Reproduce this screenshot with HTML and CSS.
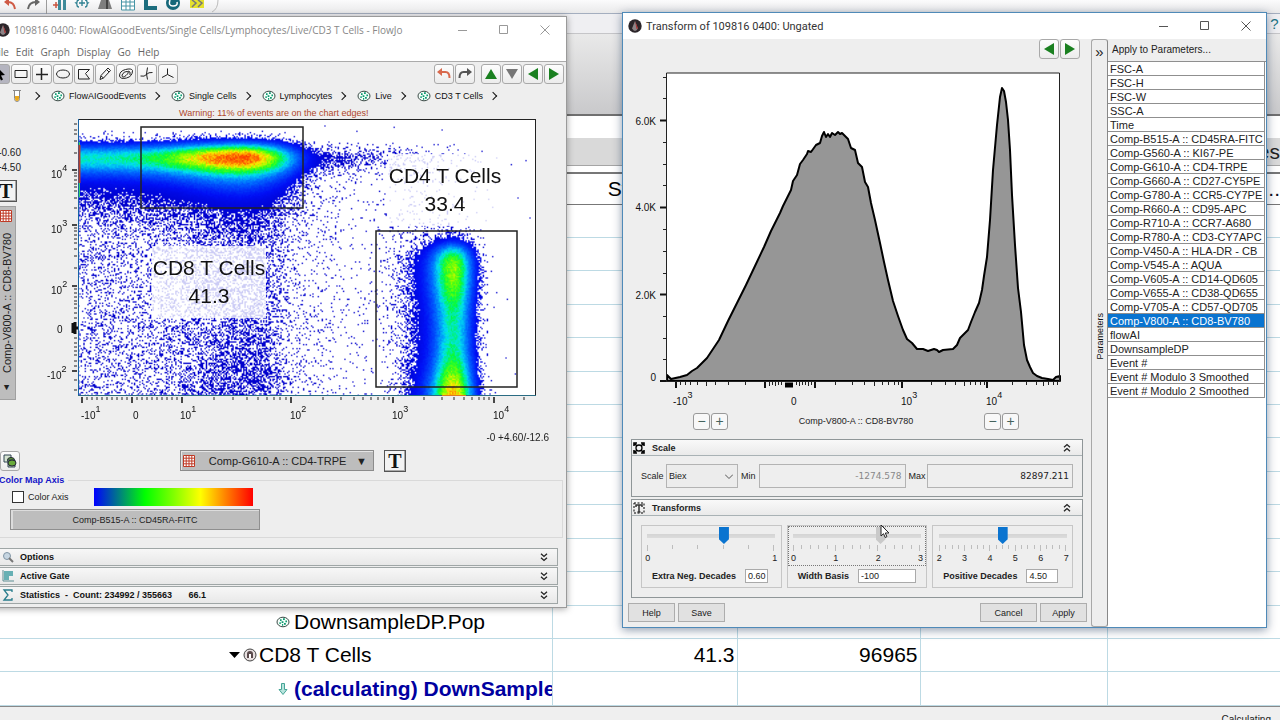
FILE: index.html
```html
<!DOCTYPE html>
<html lang="en">
<head>
<meta charset="utf-8">
<title>FlowJo</title>
<link rel="stylesheet" href="styles.css">
</head>
<body>
<svg class="defs" width="0" height="0" aria-hidden="true">
  <defs>
    <symbol id="pop" viewBox="0 0 14 12"><ellipse cx="7" cy="6" rx="6" ry="4.8" fill="#f4fffa" stroke="#3b4a46" stroke-width="1"/><path d="M4 4.2h1.6M7 3.2h1.8M9.4 5.4h1.6M5.6 6.2h1.8M3.4 7.2h1.4M8 7.8h1.8M6 8.8h1.2" stroke="#109a72" stroke-width="1.7"/></symbol>
    <symbol id="app" viewBox="0 0 14 14"><circle cx="7" cy="7" r="6.7" fill="#2b2529"/><path d="M7 2 4 9.5l2 2.2h2l2-2.2z" fill="#8d8487"/><path d="M7 2l3 7.5-1.4.5z" fill="#b02c2c"/></symbol>
    <symbol id="grid" viewBox="0 0 12 12"><path d="M.5.5h11v11H.5zM3.2 0v12M6 0v12M8.8 0v12M0 3.2h12M0 6h12M0 8.800h12" fill="#fff" stroke="#bf3a26" stroke-width="1"/></symbol>
    <symbol id="down2" viewBox="0 0 8 9"><path d="M1 .8l3 2.700 3-2.700M1 4.800l3 2.700 3-2.700" fill="none" stroke="#222" stroke-width="1.300"/></symbol>
    <symbol id="undo" viewBox="0 0 16 14"><path d="M3.500 5h6q4 0 4 6" fill="none" stroke="currentColor" stroke-width="2"/><path d="M1 5l5-4v8z" fill="currentColor"/></symbol>
    <symbol id="tri" viewBox="0 0 12 10"><path d="M6 0l6 10H0z" fill="currentColor"/></symbol>
  </defs>
</svg>

<main class="workspace">
  <header class="ribbon-tools">
    <svg width="220" height="14" viewBox="0 0 220 14" aria-hidden="true">
      <path d="M8 2q6 0 7 7" fill="none" stroke="#cf5a45" stroke-width="2"/><path d="M4 2l5-4v8z" fill="#cf5a45"/>
      <path d="M36 2q-7 0-8 7" fill="none" stroke="#666" stroke-width="2"/><path d="M40 2l-5-4v8z" fill="#666"/>
      <path d="M46.500 0v14" stroke="#9c9c9c"/>
      <path d="M53 5h6M56 2v6" stroke="#c9543f" stroke-width="1.500"/><path d="M58 0h3v10h-3zM63 0h3v10h-3z" fill="#3f8b9a"/>
      <path d="M79 0q-2 0-2 2t-1 1q1 0 1 2t2 2M85 0q2 0 2 2t1 1q-1 0-1 2t-2 2M79 3h6M82 0v6" fill="none" stroke="#2f8192" stroke-width="1.300"/>
      <path d="M101 0h8l3 9H98z" fill="#7e7e7e"/><path d="M106 0h2v9h-2z" fill="#444"/>
      <path d="M121.500-2h13v12h-13zM126 0v10M130 0v10M121 2h13M121 6h13" fill="#fff" stroke="#4795a6"/>
      <path d="M144 0h4v6h9v4h-13z" fill="#1c6d7e"/>
      <circle cx="173" cy="3" r="7" fill="#17687a"/><path d="M170 0q-2 6 3 6t4-4" fill="none" stroke="#fff" stroke-width="1.500"/>
      <path d="M190 0h14v8h-14z" fill="#e4e12c"/><path d="M192 0l4 3-4 4M198 0l4 3-4 4" fill="none" stroke="#777" stroke-width="1.500"/>
      <path d="M218 0q0 9-6 12" fill="none" stroke="#bbb"/>
    </svg>
  </header>
  <div class="ribbon-tabs"><button class="help-mark" type="button">?</button></div>
  <div class="ribbon-body"></div>
  <div class="search-strip"></div>
  <div class="group-strip"><span>es</span></div>
  <div class="tree">
    <table>
      <colgroup><col class="c-name"><col class="c-stat"><col class="c-count"><col class="c-extra"><col></colgroup>
      <thead><tr><th></th><th>Statistic</th><th></th><th></th><th class="last">I...</th></tr></thead>
      <tbody>
        <tr><td></td><td></td><td></td><td></td><td></td></tr><tr><td></td><td></td><td></td><td></td><td></td></tr>
        <tr><td></td><td></td><td></td><td></td><td></td></tr><tr><td></td><td></td><td></td><td></td><td></td></tr>
        <tr><td></td><td></td><td></td><td></td><td></td></tr><tr><td></td><td></td><td></td><td></td><td></td></tr>
        <tr><td></td><td></td><td></td><td></td><td></td></tr><tr><td></td><td></td><td></td><td></td><td></td></tr>
        <tr><td></td><td></td><td></td><td></td><td></td></tr><tr><td></td><td></td><td></td><td></td><td></td></tr>
        <tr><td></td><td></td><td></td><td></td><td></td></tr><tr><td></td><td></td><td></td><td></td><td></td></tr>
        <tr><td><div class="node deep"><svg width="14" height="12"><use href="#pop"/></svg>DownsampleDP.Pop</div></td><td></td><td></td><td></td><td></td></tr>
        <tr><td><div class="node"><svg width="28" height="14" viewBox="0 0 28 14"><path d="M0 4h11l-5.500 6z"/><circle cx="21" cy="7" r="6" fill="#e8e0e0" stroke="#444"/><path d="M18 10V6q0-3 3-3t3 3v4z" fill="#5a4a4c"/><path d="M20 10V6h2v4z" fill="#fff"/></svg>CD8 T Cells</div></td><td>41.3</td><td>96965</td><td></td><td></td></tr>
        <tr><td><div class="node deep busy"><svg width="14" height="14" viewBox="0 0 14 14"><path d="M5.500 1.500h3v6h2.500l-4 5-4-5h2.500z" fill="#b8e4dd" stroke="#46a596"/></svg>(calculating) DownSample</div></td><td></td><td></td><td></td><td></td></tr>
      </tbody>
    </table>
  </div>
  <footer class="status">Calculating</footer>
</main>

<section class="win graph" aria-label="Graph window">
  <div class="titlebar"><svg width="14" height="14"><use href="#app"/></svg><span>109816 0400: FlowAIGoodEvents/Single Cells/Lymphocytes/Live/CD3 T Cells - FlowJo</span>
    <svg class="caption" width="92" height="12" viewBox="0 0 92 12" fill="none" stroke="#999"><path d="M1 6.500h9M42.500 1.500h8v8h-8zM83.500 1.500l9 9M92.500 1.500l-9 9"/></svg></div>
  <nav class="menu"><button>File</button><button>Edit</button><button>Graph</button><button>Display</button><button>Go</button><button>Help</button></nav>
  <div class="tools">
    <button class="on" aria-label="Select"><svg width="16" height="16" viewBox="0 0 16 16"><path d="M5 1l8 8-4 .5 2 4-2 1-2-4-2 2z"/></svg></button>
    <button aria-label="Rectangle"><svg width="16" height="16" viewBox="0 0 16 16"><path class="ln" d="M2 4.500h12v7H2z"/></svg></button>
    <button aria-label="Quad"><svg width="16" height="16" viewBox="0 0 16 16"><path class="ln" d="M2 8.500h12M7.500 2v12" stroke-width="1.500"/></svg></button>
    <button aria-label="Ellipse"><svg width="16" height="16" viewBox="0 0 16 16"><ellipse class="ln" cx="8" cy="8" rx="6.500" ry="4"/></svg></button>
    <button aria-label="Polygon"><svg width="16" height="16" viewBox="0 0 16 16"><path class="ln" d="M2.500 3.500h11l-4 4 4 5.500h-11z"/></svg></button>
    <button aria-label="Pencil"><svg width="16" height="16" viewBox="0 0 16 16"><path class="ln" d="M3 13.500l1-4 7-7.500 2.500 2.500-7 7.500zM9.500 3.500l2.500 2.500M4 10l2.500 2"/></svg></button>
    <button aria-label="Autogate"><svg width="16" height="16" viewBox="0 0 16 16"><path class="ln" d="M1.500 10q0-5 6-6.500t7 1q0 6-6 7.500t-7-2zM4 9q2-4 5-3.500t-1 4T4 9zM10 5l2 1v3"/></svg></button>
    <button aria-label="Curly quad"><svg width="16" height="16" viewBox="0 0 16 16"><path class="ln" d="M1.500 10q4 1 6-1.500t6-2M8.500 1.500q-2 7 0 12"/></svg></button>
    <button aria-label="Spider"><svg width="16" height="16" viewBox="0 0 16 16"><path class="ln" d="M7.500 2.500v6L2 11.500M7.500 8.500l6 3"/></svg></button>
    <span class="fill"></span>
    <button class="red" aria-label="Undo"><svg width="16" height="14"><use href="#undo"/></svg></button>
    <button class="gry" aria-label="Redo"><svg class="flip" width="16" height="14"><use href="#undo"/></svg></button>
    <button class="grn gap" aria-label="Up"><svg width="12" height="10"><use href="#tri"/></svg></button>
    <button class="lgt" aria-label="Down"><svg class="r180" width="12" height="10"><use href="#tri"/></svg></button>
    <button class="grn" aria-label="Previous"><svg class="r270" width="12" height="10"><use href="#tri"/></svg></button>
    <button class="grn" aria-label="Next"><svg class="r90" width="12" height="10"><use href="#tri"/></svg></button>
  </div>
  <ol class="crumbs">
    <li><svg width="8" height="12" viewBox="0 0 8 12"><path d="M0 .5h8M1.500.5v8q0 3 2.500 3t2.500-3v-8" fill="#fff" stroke="#888"/><path d="M2 6h4v2.500q0 2.500-2 2.500t-2-2.500z" fill="#e9a81c"/></svg></li>
    <li><svg width="14" height="12"><use href="#pop"/></svg>FlowAIGoodEvents</li>
    <li><svg width="14" height="12"><use href="#pop"/></svg>Single Cells</li>
    <li><svg width="14" height="12"><use href="#pop"/></svg>Lymphocytes</li>
    <li><svg width="14" height="12"><use href="#pop"/></svg>Live</li>
    <li><svg width="14" height="12"><use href="#pop"/></svg>CD3 T Cells</li>
  </ol>
  <p class="warning">Warning: 11% of events are on the chart edges!</p>
  <div class="plot-row">
    <div class="side">
      <div class="coef">-0.60<br>+4.50</div>
      <button class="tbtn" aria-label="Y axis text">T</button>
      <button class="vcombo" aria-haspopup="listbox"><span>▲</span><span>Comp-V800-A :: CD8-BV780</span><svg width="12" height="12"><use href="#grid"/></svg></button>
    </div>
    <div class="plot">
      <canvas id="density" width="344" height="207"></canvas>
      <svg class="axes" width="530" height="328" viewBox="24 119 530 328">
        <rect x="152" y="246" width="114" height="72" fill="#fff" opacity=".8"/>
        <rect x="388" y="154" width="114" height="72" fill="#fff" opacity=".8"/>
        <path d="M78 119.500h458M535.500 119v277" stroke="#222" fill="none"/>
        <path d="M78.500 119v277" stroke="#1763a5"/><path d="M79.500 145v38" stroke="#b64030" stroke-width="2"/><path d="M79.500 142v3M79.500 183v14" stroke="#37d26a"/>
        <path d="M78 395.500h458" stroke="#2a6c83"/><path d="M442 395.500h24" stroke="#e07b20"/>
        <path d="M141 127h162v81H141zM376 231h141v156H376z" fill="none" stroke="#222" stroke-width="1.500"/>
        <path d="M72 170h5M72 225h5M72 286h5M72 371h5M82 397v6M132 397v6M182 397v6M291 397v6M393 397v6M494 397v6" stroke="#111" stroke-width="1.500"/>
        <path d="M73 323v10M72 328h6M75 322v12" stroke="#111" stroke-width="3"/>
        <path d="M74 124h3M74 130h3M74 134h3M74 141h3M74 153h3M74 173h3M74 176h3M74 180h3M74 184h3M74 187h3M74 191h3M74 198h3M74 208h3M74 228h3M74 231h3M74 235h3M74 239h3M74 243h3M74 249h3M74 256h3M74 268h3M74 289h3M74 293h3M74 297h3M74 301h3M74 304h3M74 308h3M74 313h3M74 318h3M74 338h3M74 343h3M74 347h3M74 351h3M74 355h3M74 361h3M74 366h3M74 380h3M74 390h3" stroke="#222"/>
        <path d="M87 397v3M92 397v3M97 397v3M102 397v3M107 397v3M112 397v3M117 397v3M122 397v3M127 397v3M137 397v3M142 397v3M147 397v3M152 397v3M157 397v3M162 397v3M167 397v3M172 397v3M177 397v3M214 397v3M233 397v3M247 397v3M258 397v3M267 397v3M274 397v3M280 397v3M286 397v3M323 397v3M341 397v3M354 397v3M363 397v3M371 397v3M378 397v3M384 397v3M389 397v3M424 397v3M442 397v3M454 397v3M464 397v3M472 397v3M479 397v3M484 397v3M489 397v3M524 397v3" stroke="#222"/>
        <g class="tick">
          <text x="51" y="178">10<tspan dy="-7">4</tspan></text><text x="51" y="233">10<tspan dy="-7">3</tspan></text><text x="51" y="294">10<tspan dy="-7">2</tspan></text><text x="57" y="333">0</text><text x="47" y="379">-10<tspan dy="-7">2</tspan></text>
          <text x="81" y="419">-10<tspan dy="-7">1</tspan></text><text x="133" y="419">0</text><text x="180" y="419">10<tspan dy="-7">1</tspan></text><text x="290" y="419">10<tspan dy="-7">2</tspan></text><text x="392" y="419">10<tspan dy="-7">3</tspan></text><text x="493" y="419">10<tspan dy="-7">4</tspan></text>
        </g>
        <g class="gate"><text x="209" y="275">CD8 T Cells</text><text x="209" y="303">41.3</text><text x="445" y="183">CD4 T Cells</text><text x="445" y="211">33.4</text></g>
        <text class="corner" x="549" y="441">-0 +4.60/-12.6</text>
      </svg>
    </div>
  </div>
  <div class="axis-row">
    <button class="mini" aria-label="Copy"><svg width="14" height="14" viewBox="0 0 14 14"><path d="M1 1h7v7H1z" fill="#d5e4d0" stroke="#345"/><ellipse cx="8" cy="6" rx="3.500" ry="2.500" fill="#5c9a35" stroke="#223"/><path d="M5 6h7v7H5z" fill="#c9dcc0" stroke="#345"/><ellipse cx="9" cy="9" rx="4" ry="3" fill="#69aa3a" stroke="#223"/></svg></button>
    <label class="combo"><svg width="12" height="12"><use href="#grid"/></svg><select aria-label="X axis"><option>Comp-G610-A :: CD4-TRPE</option></select><span>▼</span></label>
    <button class="tbtn" aria-label="X axis text">T</button>
  </div>
  <fieldset class="cmap">
    <legend>Color Map Axis</legend>
    <div class="cmap-row"><label><input type="checkbox"> Color Axis</label><span class="ramp"></span></div>
    <button class="cmap-btn">Comp-B515-A :: CD45RA-FITC</button>
  </fieldset>
  <div class="bars">
    <button><svg width="12" height="12" viewBox="0 0 12 12"><circle cx="5" cy="5" r="3.500" fill="#c7d6e2" stroke="#8195a5"/><path d="M7 7l4 4" stroke="#777" stroke-width="2"/></svg><b>Options</b><svg width="8" height="9"><use href="#down2"/></svg></button>
    <button><svg width="12" height="12" viewBox="0 0 12 12"><path d="M1 0v11h11" fill="none" stroke="#5c8d92"/><path d="M2 1h9v5H7v4H2z" fill="#67b0b4"/></svg><b>Active Gate</b><svg width="8" height="9"><use href="#down2"/></svg></button>
    <button><svg width="12" height="12" viewBox="0 0 12 12"><path d="M10 3V1H2l4 5-4 5h8V9" fill="none" stroke="#287c8c" stroke-width="1.300"/></svg><b>Statistics &nbsp;- &nbsp;Count: 234992 / 355663 <i>66.1</i></b><svg width="8" height="9"><use href="#down2"/></svg></button>
  </div>
</section>

<section class="win transform" aria-label="Transform window">
  <div class="titlebar"><svg width="14" height="14"><use href="#app"/></svg><span>Transform of 109816 0400: Ungated</span>
    <svg class="caption" width="92" height="12" viewBox="0 0 92 12" fill="none" stroke="#555"><path d="M1 6.500h9M42.500 1.500h8v8h-8zM83.500 1.500l9 9M92.500 1.500l-9 9"/></svg></div>
  <div class="body">
    <div class="left">
      <div class="nav"><button class="sq grn" aria-label="Previous"><svg class="r270" width="12" height="10"><use href="#tri"/></svg></button><button class="sq grn" aria-label="Next"><svg class="r90" width="12" height="10"><use href="#tri"/></svg></button></div>
      <svg class="hist" width="450" height="352" viewBox="630 60 450 352">
        <path d="M666 73h394v308H666z" fill="#fff"/>
        <path d="M667 381L667 375 671 379 680 377 687 375 692 371 697 368 702 363 707 358 713 349 719 340 728 321 737 303 746 285 755 266 764 247 771 231 777 219 780 213 783 206 787 198 791 190 793 181 797 175 800 164 803 160 807 154 808 151 811 152 816 145 820 143 822 136 824 132 826 137 828 134 830 137 832 133 835 135 838 132 840 134 842 133 845 136 848 139 851 148 855 150 858 163 862 167 865 182 868 187 871 203 875 220 880 243 884 262 888 280 893 301 898 316 903 330 907 339 912 343 917 349 923 349 928 351 931 350 934 349 937 350 939 352 943 350 953 349 957 345 960 338 964 334 968 330 971 322 975 312 979 303 982 290 984 276 987 257 990 220 993 170 997 125 1000 97 1002 88 1004 91 1006 102 1008 120 1010 150 1012 195 1015 245 1018 288 1021 312 1024 345 1027 360 1030 367 1033 373 1037 376 1042 378 1048 379 1053 380 1056 377 1060 376 1060 381z" fill="#969696" stroke="#000" stroke-width="2" stroke-linejoin="round"/>
        <path d="M666.500 381V73h393v308" fill="none" stroke="#222"/><path d="M660 381.500h400" stroke="#222"/>
        <path d="M660 120.500h6M660 207.500h6M660 294.500h6M660 381h6M676 382v6M765 382v6M815 382v6M902 382v6M987 382v6" stroke="#111" stroke-width="2"/>
        <path d="M663 77.500h3M663 98.500h3M663 142.500h3M663 164.500h3M663 185.500h3M663 229.500h3M663 251.500h3M663 273.500h3M663 316.500h3M663 338.500h3M663 359.500h3M680.500 382v3M685.500 382v3M690.500 382v3M697.500 382v3M706.500 382v4M715.500 382v3M728.500 382v3M745.500 382v3M769.500 382v4M772.500 382v3M775.500 382v4M778.500 382v3M781.500 382v3M796.500 382v3M799.500 382v4M802.500 382v3M805.500 382v3M808.500 382v4M811.500 382v3M835.500 382v3M852.500 382v3M864.500 382v3M874.500 382v4M882.500 382v3M888.500 382v3M894.500 382v3M898.500 382v3M931.500 382v3M945.500 382v3M955.500 382v3M964.500 382v4M970.500 382v3M975.500 382v3M980.500 382v3M984.500 382v3M1012.500 382v3M1026.500 382v3M1036.500 382v3M1043.500 382v4M1048.500 382v3M1053.500 382v3M1057.500 382v3" stroke="#222"/>
        <path d="M785 385h8" stroke="#000" stroke-width="5"/>
        <g class="tick"><g text-anchor="end"><text x="656" y="125">6.0K</text><text x="656" y="211">4.0K</text><text x="656" y="299">2.0K</text><text x="656" y="381">0</text></g>
        <text x="673" y="405">-10<tspan dy="-7">3</tspan></text><text x="791" y="405">0</text><text x="901" y="405">10<tspan dy="-7">3</tspan></text><text x="986" y="405">10<tspan dy="-7">4</tspan></text></g>
      </svg>
      <div class="zoomrow"><button>−</button><button>+</button><span>Comp-V800-A :: CD8-BV780</span><button>−</button><button>+</button></div>
      <section class="panel">
        <h2><svg width="12" height="12" viewBox="0 0 12 12"><circle cx="6" cy="6" r="3" fill="none" stroke="#000" stroke-width="1.300"/><path d="M1 4V1h3M8 1h3v3M11 8v3H8M4 11H1V8M2 2l2 2M10 2L8 4M10 10L8 8M2 10l2-2" fill="none" stroke="#000" stroke-width="1.600"/></svg>Scale<svg class="r180" width="8" height="9"><use href="#down2"/></svg></h2>
        <div class="scale"><label for="sc">Scale</label><span class="sel"><select id="sc"><option>Biex</option></select><svg width="8" height="5" viewBox="0 0 8 5"><path d="M0 .5l4 4 4-4" fill="none" stroke="#555"/></svg></span><label for="mn">Min</label><input id="mn" class="dim" value="-1274.578"><label for="mx">Max</label><input id="mx" value="82897.211"></div>
      </section>
      <section class="panel">
        <h2><svg width="12" height="12" viewBox="0 0 12 12"><path d="M1 1h10v10H1z" fill="none" stroke="#000" stroke-dasharray="2 1.500"/><path d="M3 5V3h6v2M6 3v7M4.500 10h3" fill="none" stroke="#333" stroke-width="1.500"/></svg>Transforms<svg class="r180" width="8" height="9"><use href="#down2"/></svg></h2>
        <div class="groups">
          <div class="group"><div class="slide"><input type="range" min="0" max="1" step="0.01" value="0.6" aria-label="Extra Neg. Decades"><svg class="ticks" data-n="5" data-major="5" width="128" height="6"></svg><div class="nums"><span>0</span><span>1</span></div></div><div class="field"><label for="en">Extra Neg. Decades</label><input id="en" class="w1" value="0.60"></div></div>
          <div class="group"><div class="slide focus"><input class="off" type="range" min="0" max="3" step="0.01" value="2.06" aria-label="Width Basis"><svg class="ticks" data-n="15" data-major="5" width="128" height="6"></svg><div class="nums"><span>0</span><span>1</span><span>2</span><span>3</span></div></div><div class="field"><label for="wb">Width Basis</label><input id="wb" class="w2" value="-100"></div></div>
          <div class="group"><div class="slide"><input type="range" min="2" max="7" step="0.01" value="4.5" aria-label="Positive Decades"><svg class="ticks" data-n="20" data-major="4" width="128" height="6"></svg><div class="nums"><span>2</span><span>3</span><span>4</span><span>5</span><span>6</span><span>7</span></div></div><div class="field"><label for="pd">Positive Decades</label><input id="pd" class="w3" value="4.50"></div></div>
        </div>
      </section>
      <div class="actions"><button>Help</button><button>Save</button><span class="fill"></span><button>Cancel</button><button>Apply</button></div>
    </div>
    <div class="splitter"><button aria-label="Collapse">»</button><span>Parameters</span></div>
    <aside class="params">
      <h3>Apply to Parameters...</h3>
      <ul>
        <li>FSC-A</li><li>FSC-H</li><li>FSC-W</li><li>SSC-A</li><li>Time</li>
        <li>Comp-B515-A :: CD45RA-FITC</li><li>Comp-G560-A :: KI67-PE</li><li>Comp-G610-A :: CD4-TRPE</li><li>Comp-G660-A :: CD27-CY5PE</li><li>Comp-G780-A :: CCR5-CY7PE</li><li>Comp-R660-A :: CD95-APC</li><li>Comp-R710-A :: CCR7-A680</li><li>Comp-R780-A :: CD3-CY7APC</li><li>Comp-V450-A :: HLA-DR - CB</li><li>Comp-V545-A :: AQUA</li><li>Comp-V605-A :: CD14-QD605</li><li>Comp-V655-A :: CD38-QD655</li><li>Comp-V705-A :: CD57-QD705</li><li class="sel-row">Comp-V800-A :: CD8-BV780</li><li>flowAI</li><li>DownsampleDP</li><li>Event #</li><li>Event # Modulo 3 Smoothed</li><li>Event # Modulo 2 Smoothed</li>
      </ul>
    </aside>
  </div>
</section>
<svg class="cursor" width="10" height="15" viewBox="0 0 10 15" aria-hidden="true"><path d="M1 1v11l2.500-2.300L5.200 13.500l1.700-.8L5.300 9H9z" fill="#fff" stroke="#222"/></svg>
<script src="app.js"></script>
</body>
</html>
```
FILE: styles.css
```css
* { box-sizing: border-box; }
body { margin: 0; height: 100vh; overflow: hidden; position: relative; font-family: "Liberation Sans", Arial, sans-serif; font-size: 9px; color: #222; background: #fff; }
button, input, select { font: inherit; color: inherit; margin: 0; padding: 0; border: 0; background: none; }
svg { display: block; flex: none; }
.defs { position: absolute; }
.fill { flex: 1; }

/* Workspace behind the windows */
.workspace { height: 100vh; display: flex; flex-direction: column; overflow: hidden; }
.ribbon-tools { height: 14px; flex: none; background: linear-gradient(#fbfbfc, #e9e9ea); border-bottom: 1px solid #a4aebf; }
.ribbon-tabs { height: 20px; flex: none; background: #efeff2; border-bottom: 1px solid #c5c5c8; display: flex; justify-content: flex-end; }
.help-mark { color: #1c7484; font-size: 15px; width: 11px; flex: none; }
.ribbon-body { height: 82px; flex: none; background: linear-gradient(#e9e9e9, #c9c9cb); border-bottom: 2px solid #707070; }
.search-strip { height: 22px; flex: none; }
.group-strip { height: 28px; flex: none; background: #d9d9d9; border-bottom: 1px solid #a5a5a5; display: flex; justify-content: flex-end; align-items: center; font-size: 21px; overflow: hidden; }
.tree { flex: 1; min-height: 0; padding-top: 6px; }
.tree table { width: 100%; height: 100%; border-collapse: collapse; table-layout: fixed; font-size: 21px; color: #000; }
.c-name { width: 552px; } .c-stat { width: 185px; } .c-count { width: 183px; } .c-extra { width: 187px; }
.tree th { height: 31px; padding: 0; font-weight: 400; border-top: 2px solid #777; border-bottom: 1px solid #777; }
.tree th.last { text-align: right; color: #112; }
.tree td { height: 33px; padding: 0 2px 0 0; text-align: right; border: 1px solid #bddae4; border-left: 0; line-height: 24px; }
.tree td:last-child { border-right: 0; }
.node { display: flex; align-items: center; gap: 2px; padding-left: 229px; white-space: nowrap; overflow: hidden; }
.node.deep { padding-left: 276px; gap: 4px; }
.tree td:first-child { padding: 0; }
.busy { color: #0000a0; font-weight: 700; }
.status { height: 14px; flex: none; background: #efefef; border-top: 1px solid #888; text-align: right; padding: 7px 9px 0 0; font-size: 10px; line-height: 12px; overflow: hidden; }

/* Window chrome */
.win { position: absolute; background: #eeeeee; display: flex; flex-direction: column; }
.graph { left: -14px; top: 16px; width: 581px; min-height: 591px; border: 1px solid #9a9a9a; box-shadow: 0 1px 7px rgba(0,0,0,.35); }
.transform { left: 622px; top: 12px; width: 645px; min-height: 616px; border: 1px solid #4f8ab8; box-shadow: 0 2px 9px rgba(0,30,70,.45); }
.titlebar { background: #fff; height: 26px; display: flex; align-items: center; gap: 4px; padding: 0 17px 0 9px; font-family: "Open Sans", "Noto Sans", sans-serif; font-size: 10px; color: #888; white-space: nowrap; }
.transform .titlebar { padding: 0 16px 0 5px; color: #333; font-family: Roboto, "Noto Sans", sans-serif; font-size: 11px; }
.caption { margin-left: auto; overflow: visible; }
.menu { background: #fff; height: 19px; display: flex; align-items: center; gap: 7px; padding: 0 0 0 6px; border-bottom: 1px solid #ababab; font-family: "Open Sans", "Noto Sans", sans-serif; font-size: 10px; color: #666; }
.tools { display: flex; gap: 1px; padding: 1px 2px 1px 3px; height: 24px; align-items: center; }
.tools button, .mini, .sq { width: 20px; height: 20px; flex: none; border: 1px solid #a9a9a9; border-radius: 3px; background: linear-gradient(#fdfdfd, #ececec); display: grid; place-items: center; }
.tools .on { background: #b5b5c0; }
.tools .gap { margin-left: 5px; }
.ln { fill: none; stroke: #222; }
.tools .grn, .grn { color: #1a8020; } .tools .lgt { color: #777; }
.tools .red { color: #d8694d; } .tools .gry { color: #555; }
.flip { transform: scaleX(-1); }
.r90 { transform: rotate(90deg); } .r180 { transform: rotate(180deg); } .r270 { transform: rotate(270deg); }
.crumbs { list-style: none; margin: 0; padding: 0 0 0 26px; height: 20px; display: flex; align-items: center; color: #111; white-space: nowrap; }
.crumbs li { display: flex; align-items: center; gap: 4px; }
.crumbs li::after { content: ""; width: 5px; height: 5px; border: solid #111; border-width: 1px 1px 0 0; transform: rotate(45deg); margin: 0 12px 0 3px; }
.crumbs li:first-child::after { margin-left: 8px; }
.warning { margin: 0; height: 13px; padding-left: 192px; line-height: 14px; color: #b0482c; white-space: nowrap; }

/* Density plot */
.plot-row { display: flex; }
.side { width: 37px; display: flex; flex-direction: column; align-items: flex-end; padding: 26px 4px 0 0; }
.coef { text-align: right; font-size: 10px; line-height: 15px; margin-right: -1px; }
.tbtn { width: 22px; height: 22px; flex: none; border: 1px solid #555; box-shadow: inset -1px -1px #aaa; background: #f3f3f3; font: 700 20px/18px "Liberation Serif", serif; color: #111; }
.side .tbtn { margin: 5px 3px 0 0; }
.vcombo { writing-mode: vertical-rl; transform: rotate(180deg); height: 194px; width: 19px; margin: 4px 4px 0 0; background: #bdbdbd; border: 1px solid #a0a0a0; display: flex; align-items: center; justify-content: space-between; padding: 6px 0 3px; font-size: 11px; white-space: nowrap; }
.vcombo span:first-child { font-size: 9px; }
.plot { display: grid; }
.plot > * { grid-area: 1 / 1; }
#density { margin: 1px 0 0 54px; width: 458px; height: 276px; background: #fff; }
.axes { position: relative; }
.tick { font-size: 10px; fill: #111; }
.tick tspan { font-size: 9px; }
.gate { font-size: 21px; text-anchor: middle; fill: #111; }
.corner { font-size: 10px; text-anchor: end; fill: #222; }
.axis-row { display: flex; align-items: center; padding: 2px 0 0 13px; height: 25px; }
.combo { display: flex; align-items: center; width: 194px; height: 21px; margin: 0 10px 0 160px; padding: 0 6px 0 2px; background: #bdbdbd; border: 1px solid #8c8c8c; box-shadow: inset 1px 1px #e4e4e4; font-size: 11px; }
.combo select { flex: 1; appearance: none; text-align: center; padding-left: 4px; }
.cmap { margin: 1px 3px 0 0; padding: 0 0 7px 22px; border: 1px solid #d9d9d9; }
.cmap legend { margin-left: -12px; padding: 0 4px 0 1px; font-weight: 700; color: #1414c8; line-height: 14px; }
.cmap-row { display: flex; align-items: center; height: 20px; padding-left: 2px; }
.cmap label { display: flex; align-items: center; gap: 4px; width: 82px; }
.cmap input { appearance: none; width: 12px; height: 12px; border: 1px solid #333; background: #fff; }
.ramp { width: 159px; height: 18px; background: linear-gradient(90deg, #00f, #008080 16%, #0f0 32%, #80ff00 50%, #ff0 67%, #ff8000 83%, #f00); }
.cmap-btn { display: block; width: 250px; height: 21px; margin-top: 2px; background: #bdbdbd; border: 1px solid #8f8f8f; box-shadow: inset 2px 1px #dcdcdc; }
.bars { display: flex; flex-direction: column; gap: 1px; padding: 10px 8px 3px 12px; }
.bars button { display: flex; align-items: center; gap: 6px; height: 18px; padding: 0 9px 0 2px; border: 1px solid #9fa6a6; background: linear-gradient(#f7f7f7, #e8e8e8); text-align: left; color: #111; }
.bars b { flex: 1; } .bars i { font-style: normal; margin-left: 14px; }

/* Transform dialog */
.body { display: flex; flex: 1; }
.left { flex: 1; min-width: 0; display: flex; flex-direction: column; padding: 0 4px 4px 5px; }
.nav { display: flex; justify-content: flex-end; gap: 1px; height: 21px; padding-right: 7px; }
.hist { margin-left: 2px; }
.zoomrow { display: flex; align-items: center; gap: 1px; padding: 0 68px 0 65px; height: 18px; }
.zoomrow span { flex: 1; text-align: center; }
.zoomrow button { width: 17px; height: 17px; border: 1px solid #999; border-radius: 3px; background: #f8f8f8; font-size: 14px; line-height: 14px; color: #44625c; }
.panel { margin: 9px 4px 0 3px; border: 1px solid #8f9698; }
.panel + .panel { margin-top: 2px; }
.panel h2 { margin: 0; height: 16px; display: flex; align-items: center; gap: 7px; padding: 0 11px 0 1px; font-size: 9px; border-bottom: 1px solid #a9b2b5; background: linear-gradient(#f9f9f9, #eaeaea); }
.panel h2 svg:last-child { margin-left: auto; }
.scale { display: flex; align-items: center; padding: 8px 9px; height: 40px; }
.scale > label { width: 18px; flex: none; }
.scale > label:first-child { width: 25px; }
.sel { width: 72px; height: 24px; flex: none; border: 1px solid #b3b3b3; display: flex; align-items: center; padding: 0 4px 0 2px; margin-right: 3px; background: #ececec; }
.sel select { flex: 1; appearance: none; }
.scale input { flex: 1; min-width: 0; height: 24px; border: 1px solid #b3b3b3; text-align: right; padding-right: 3px; font-family: "DejaVu Sans", sans-serif; font-size: 9px; }
.scale input + label { margin-left: 3px; }
.scale input.dim { color: #888; }
.groups { display: flex; gap: 5px; padding: 9px; }
.group { flex: 1; border: 1px solid #c6c6c6; height: 63px; }
.slide { height: 40px; display: flex; flex-direction: column; align-items: center; border: 1px solid transparent; }
.slide.focus { border: 1px dotted #777; }
.slide input { appearance: none; width: 136px; height: 17px; margin: 0 0 1px; background: linear-gradient(#d4d4d4, #dcdcdc) center 7px / 128px 4px no-repeat; }
.slide input::-webkit-slider-thumb { appearance: none; width: 10px; height: 17px; background: #0a74d0; clip-path: polygon(0 0, 100% 0, 100% 72%, 50% 100%, 0 72%); }
.slide input.off::-webkit-slider-thumb { background: #c9c9c9; }
.ticks { stroke: #bdbdbd; }
.nums { width: 132px; display: flex; justify-content: space-between; line-height: 14px; }
.field { display: flex; align-items: center; padding-left: 10px; height: 20px; font-weight: 700; }
.field input { height: 14px; border: 1px solid #aaa; background: #fff; padding-left: 2px; margin-left: 9px; font-weight: 400; font-size: 9px; }
.w1 { width: 23px; } .w2 { width: 58px; } .w3 { width: 32px; }
.actions { display: flex; gap: 3px; padding-top: 5px; }
.actions button { min-width: 47px; height: 19px; padding: 0 8px; border: 1px solid #adadad; background: #e1e1e1; }
.actions .fill + button { width: 57px; }
.splitter { width: 17px; flex: none; border: 1px solid #a8a8a8; border-right-color: #888; border-radius: 3px; display: flex; flex-direction: column; align-items: center; }
.splitter button { font-size: 15px; line-height: 24px; }
.splitter span { writing-mode: vertical-rl; transform: rotate(180deg); margin-top: 249px; color: #111; }
.params { width: 158px; flex: none; background: #fff; font-size: 11px; }
.params h3 { margin: 0; height: 23px; padding-left: 4px; font-size: 10px; font-weight: 400; line-height: 22px; background: #eee; border-bottom: 1px solid #8f8f8f; }
.params ul { list-style: none; margin: 0 1px 0 0; padding: 0; border-right: 1px solid #8f8f8f; }
.params li { height: 14px; line-height: 14px; padding-left: 2px; border-bottom: 1px solid #8f8f8f; white-space: nowrap; }
.params .sel-row { background: #0a74d0; color: #fff; }
.cursor { position: absolute; left: 880px; top: 524px; }
```
FILE: app.js
```js
// Slider tick marks
document.querySelectorAll('.ticks').forEach(function (svg) {
  var n = +svg.dataset.n, major = +svg.dataset.major, d = '';
  for (var i = 0; i <= n; i++) {
    d += 'M' + (Math.round(i * 126 / n) + 0.5) + ' 0v' + (i % major ? 4 : 6);
  }
  var p = document.createElementNS('http://www.w3.org/2000/svg', 'path');
  p.setAttribute('d', d);
  svg.appendChild(p);
});

// Pseudocolor density plot of the two T cell populations
var seed = 7;
function rnd() {
  seed = (seed * 1664525 + 1013904223) % 4294967296;
  return seed / 4294967296;
}
function bell(v, c, lo, hi) {
  var s = v < c ? lo : hi;
  return Math.exp(-(v - c) * (v - c) / (2 * s * s));
}
function step(v, c, w) { return 1 / (1 + Math.exp(-(v - c) / w)); }
var stops = [[0, 0, 0, 205], [0.08, 0, 15, 245], [0.22, 0, 110, 255], [0.36, 0, 225, 240], [0.48, 0, 250, 60], [0.62, 120, 255, 0], [0.74, 250, 240, 0], [0.88, 255, 130, 0], [1, 250, 60, 0]];
function color(v) {
  v = Math.max(0, Math.min(1, v));
  for (var i = 1; i < stops.length; i++) {
    if (v <= stops[i][0]) {
      var a = stops[i - 1], b = stops[i], t = (v - a[0]) / (b[0] - a[0]);
      return [a[1] + (b[1] - a[1]) * t, a[2] + (b[2] - a[2]) * t, a[3] + (b[3] - a[3]) * t];
    }
  }
}
function level(x, y) {
  var right = step(-x, -295, 10);
  var core = (0.2 + 0.44 * bell(x, 243, 46, 24)) * bell(y, 157, 8, 9);
  var halo = (0.19 + 0.17 * bell(x, 240, 50, 30)) * bell(y, 160, 11, 15 + 6 * bell(x, 240, 50, 40));
  var mid = 0.4 + 0.24 * bell(y, 268, 16, 24) + 0.46 * bell(y, 402, 24, 30);
  var cd4 = mid * (0.7 * bell(x, 453, 12, 11) + 0.3 * bell(x, 450, 22, 16)) * step(y, 246, 5);
  return (core + halo) * right + cd4;
}
function sparse(x, y) {
  var p = 0;
  if (y > 142) {
    p += 0.13 * step(-x, -285, 8);
    p += 0.4 * bell(x, 250, 42, 20) * (0.35 + 0.6 * bell(y, 195, 30, 40) + 0.75 * bell(y, 400, 55, 30));
    p += 0.5 * step(-x, -290, 12) * bell(y, 190, 20, 18);
    p += 0.025 * step(-x, -385, 12);
    p += 0.06 * step(-x, -325, 15);
  }
  p += 0.75 * bell(x, 300, 8, 40) * bell(y, 159, 6, 7);
  p += 0.2 * bell(x, 390, 60, 38) * bell(y, 154, 5, 7);
  p += 0.05 * bell(x, 430, 60, 30) * bell(y, 180, 20, 40);
  p += 0.5 * bell(x, 425, 19, 30) * step(y, 252, 9) * step(-x, -476, 2);
  p += 0.25 * bell(x, 455, 22, 12) * bell(y, 240, 9, 40);
  p += 0.001;
  return y < 124 ? 0 : p;
}
var cv = document.getElementById('density'), ctx = cv.getContext('2d');
var img = ctx.createImageData(cv.width, cv.height);
for (var j = 0; j < cv.height; j++) {
  for (var i = 0; i < cv.width; i++) {
    var x = 78 + i * 458 / cv.width, y = 120 + j * 276 / cv.height;
    var v = level(x, y), r1 = rnd(), r2 = rnd(), k = (j * cv.width + i) * 4, c = [255, 255, 255];
    var p = sparse(x, y) + Math.pow(v / 0.09, 1.6);
    if (r1 < p) { c = color(v * (0.88 + 0.24 * r2)); }
    img.data[k] = c[0]; img.data[k + 1] = c[1]; img.data[k + 2] = c[2]; img.data[k + 3] = 255;
  }
}
ctx.putImageData(img, 0, 0);
```
